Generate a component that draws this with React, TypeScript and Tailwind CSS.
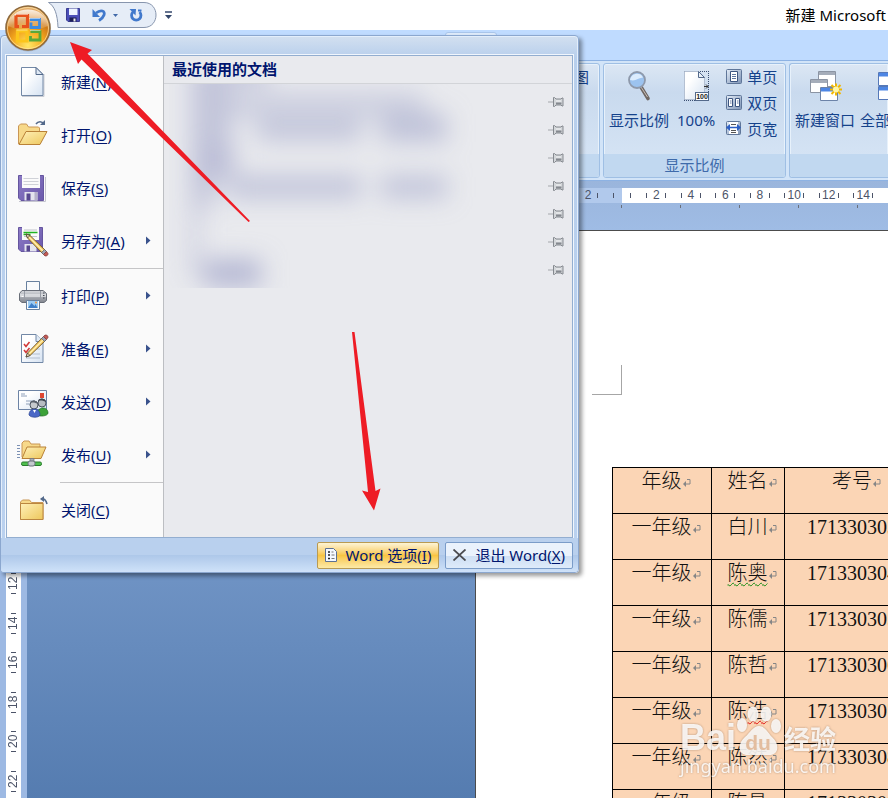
import React from "react";

type IconProps = { className?: string };

const UI_FONT = "font-['Noto_Sans','Noto_Sans_CJK_SC',sans-serif]";

/* ---------- gradients shared by the drawings ---------- */

function SharedDefs() {
  return (
    <svg className="absolute size-0" aria-hidden="true">
      <defs>
        <linearGradient id="paper" x1="0" y1="0" x2="1" y2="1">
          <stop offset="0.3" stopColor="#ffffff" />
          <stop offset="1" stopColor="#d5e2f2" />
        </linearGradient>
        <linearGradient id="folder" x1="0" y1="0" x2="1" y2="1">
          <stop offset="0" stopColor="#fff0b8" />
          <stop offset="1" stopColor="#edc75c" />
        </linearGradient>
        <linearGradient id="disk" x1="0" y1="0" x2="1" y2="1">
          <stop offset="0" stopColor="#8d7cc6" />
          <stop offset="1" stopColor="#6a58ab" />
        </linearGradient>
        <linearGradient id="metal" x1="0" y1="0" x2="0" y2="1">
          <stop offset="0" stopColor="#d6d8dc" />
          <stop offset="1" stopColor="#82868f" />
        </linearGradient>
        <linearGradient id="chip" x1="0" y1="0" x2="1" y2="1">
          <stop offset="0" stopColor="#e4edf8" />
          <stop offset="1" stopColor="#7d93b5" />
        </linearGradient>
        <radialGradient id="orb" cx="0.5" cy="0.9" r="0.9">
          <stop offset="0" stopColor="#ffe766" />
          <stop offset="0.4" stopColor="#f5a81c" />
          <stop offset="0.65" stopColor="#cf7a18" />
          <stop offset="1" stopColor="#e9b87c" />
        </radialGradient>
        <linearGradient id="gloss" x1="0" y1="0" x2="0" y2="1">
          <stop offset="0" stopColor="#fff" stopOpacity="0.8" />
          <stop offset="1" stopColor="#fff" stopOpacity="0.1" />
        </linearGradient>
      </defs>
    </svg>
  );
}

/* ---------- menu icons ---------- */

function NewIcon({ className }: IconProps) {
  return (
    <svg viewBox="0 0 32 32" className={className}>
      <path d="M5 30.500h22V8" fill="none" stroke="#c9ccd3" />
      <path d="M4.500 1.500h14.500l7 7v21H4.500z" fill="url(#paper)" stroke="#7288a6" />
      <path d="M19 1.500v7h7z" fill="#dfe9f5" stroke="#53698a" />
    </svg>
  );
}

function OpenIcon({ className }: IconProps) {
  return (
    <svg viewBox="0 0 32 32" className={className}>
      <path d="M1.500 25V7l2-2h6l2 3h10l1 1v4" fill="#f7d98a" stroke="#c99655" />
      <path d="M2 25.500l7-13h21l-7 13z" fill="url(#folder)" stroke="#b98137" />
      <path d="M19 5c2-3 6-3 8 0" fill="none" stroke="#53698a" strokeWidth="1.500" />
      <path d="M28 1v5h-5z" fill="#53698a" />
    </svg>
  );
}

function SaveIcon({ className }: IconProps) {
  return (
    <svg viewBox="0 0 32 32" className={className}>
      <path d="M2 29.500h26.500V5" fill="none" stroke="#c5c5cf" />
      <path d="M1.500 3.500h25v25H4l-2.500-2.500z" fill="url(#disk)" stroke="#65559f" />
      <path d="M5 3h18v13H5z" fill="#fbfbfb" />
      <path d="M6.500 6.500h15M6.500 9.500h15M6.500 12.500h15" stroke="#d0d2d8" />
      <path d="M7.500 20h13v8.500h-13z" fill="#e4e4ee" />
      <path d="M9.500 21.500h4v7h-4z" fill="#57478f" />
      <path d="M17.500 20h3v8.500h-3z" fill="#b5b1ca" />
    </svg>
  );
}

function Pencil() {
  return (
    <g>
      <path d="M0 0l1.500 4L17 20l3-3L4 1.500z" fill="#f2c75e" stroke="#6e5529" strokeWidth="0.900" />
      <path d="M2.500 2.500l16 16" stroke="#fff0b2" strokeWidth="1.200" />
      <path d="M0 0l1.500 4L4 1.500z" fill="#f1dfbf" stroke="#4a3f32" strokeWidth="0.800" />
      <path d="M15.500 18.500l3-3 2 2-3 3z" fill="#9fa6b3" stroke="#565d6b" strokeWidth="0.700" />
      <path d="M17.500 20.500l3-3 1.500 2c0 2-1 2.500-3 2.500z" fill="#c45b56" stroke="#7d3532" strokeWidth="0.700" />
    </g>
  );
}

function SaveAsIcon({ className }: IconProps) {
  return (
    <svg viewBox="0 0 32 32" className={className}>
      <path d="M1.500 2.500h24v24H4l-2.500-2.500z" fill="url(#disk)" stroke="#65559f" />
      <path d="M5 2h17v13H5z" fill="#fbfbfb" />
      <path d="M7 5h13M7 11.500h13" stroke="#c1c3ca" />
      <path d="M6.500 7.500h14M6.500 9.500h7" stroke="#21b421" strokeWidth="1.300" />
      <path d="M7.500 19h12v7.500h-12z" fill="#e4e4ee" />
      <path d="M9.500 20.500H13v6H9.500z" fill="#57478f" />
      <g transform="translate(9 9)">
        <Pencil />
      </g>
    </svg>
  );
}

function PrintIcon({ className }: IconProps) {
  return (
    <svg viewBox="0 0 32 32" className={className}>
      <path d="M9.500 11V1.500h13V11z" fill="#f8fafc" stroke="#67809f" />
      <path d="M5 10.500h21l3.500 3v7L27 22.500H5l-2.500-2v-7z" fill="url(#metal)" stroke="#696e78" />
      <path d="M3 14h26v3H3z" fill="#e6e7ea" opacity="0.7" />
      <path d="M7.500 11v8h16v-8" fill="none" stroke="#989ca5" />
      <path d="M26 13h1.500M26 15.500h1.500M26 18h1.500" stroke="#454b56" />
      <path d="M4.500 16.500h2" stroke="#fff" />
      <path d="M9.500 20.500h13v9h-13z" fill="#f8fafc" stroke="#67809f" />
      <path d="M11 21h10v7H11z" fill="#9ccbf2" />
      <path d="M11 28l3.500-5 3 3 1-2 2 4z" fill="#3e7fc9" />
      <circle cx="19" cy="22.500" r="1" fill="#f0923c" />
    </svg>
  );
}

function PrepareIcon({ className }: IconProps) {
  return (
    <svg viewBox="0 0 32 32" className={className}>
      <path d="M4.500 1.500h14.500l7 7v21H4.500z" fill="url(#paper)" stroke="#7288a6" />
      <path d="M19 1.500v7h7" fill="#dfe9f5" stroke="#7288a6" />
      <path d="M7 11l2 2.500 3.500-4.500M7 17l2 2.500 3.500-4.500" fill="none" stroke="#d23a3a" strokeWidth="1.600" />
      <path d="M12 21h11M9 25h14M16 16h7" stroke="#b3bfd0" />
      <g transform="translate(9 24) scale(1 -1)">
        <Pencil />
      </g>
    </svg>
  );
}

function SendIcon({ className }: IconProps) {
  return (
    <svg viewBox="0 0 32 32" className={className}>
      <path d="M1.500 4.500h28v19h-28z" fill="url(#paper)" stroke="#6c83a5" />
      <path d="M4 8h4M4 10h6M9 15h9M9 18h6" stroke="#8fa0ba" />
      <path d="M23 7h4v5h-4z" fill="#de4632" />
      <circle cx="25" cy="17" r="4" fill="#b7bcc2" stroke="#4d5560" />
      <path d="M21 15c0-3 7-4 8 1-2-1-5-2-8-1z" fill="#3f4650" />
      <path d="M20 29c0-9 11-9 11-2 0 3-8 4-11 2z" fill="#3ca238" stroke="#206b24" strokeWidth="0.700" />
      <circle cx="17" cy="19" r="4" fill="#c6cace" stroke="#4d5560" />
      <path d="M13 17c0-3 7-4 8 1-2-1-5-2-8-1z" fill="#59616c" />
      <path d="M12 29c0-8 11-8 11 0-1 3-9 3-11 0z" fill="#4a68c6" stroke="#2d4591" strokeWidth="0.700" />
      <path d="M16 24l1.500 3 1.500-3z" fill="#fff" />
    </svg>
  );
}

function PublishIcon({ className }: IconProps) {
  return (
    <svg viewBox="0 0 32 32" className={className}>
      <path d="M0 6.500h3M0 9.500h3M0 12.500h3M0 15.500h3M0 18.500h3" stroke="#7b90b4" strokeWidth="1.200" />
      <path d="M5 18V4l2-2h5l2 3h9v4" fill="#f7d98a" stroke="#c99655" />
      <path d="M5 19.500L10 8h19l-5 11.500z" fill="url(#folder)" stroke="#b98137" />
      <path d="M13 19.500h4V24h-4z" fill="#a7acb5" stroke="#6d737e" strokeWidth="0.700" />
      <rect x="4.500" y="23" width="20" height="3.500" rx="1.500" fill="#4fc04d" stroke="#2c7d2f" />
      <rect x="11" y="22" width="7" height="5" rx="2" fill="#c5c9cf" stroke="#6d737e" />
    </svg>
  );
}

function CloseDocIcon({ className }: IconProps) {
  return (
    <svg viewBox="0 0 32 32" className={className}>
      <path d="M3.500 25.500V8l2-2h7l2 2.500H26v17z" fill="#f7d98a" stroke="#c99655" />
      <path d="M3.500 9.500H26v16H3.500z" fill="url(#folder)" stroke="#bb8640" />
      <path d="M24 5c3-1 5 1 6 5" fill="none" stroke="#53698a" strokeWidth="1.600" />
      <path d="M23 5l4-3v6z" fill="#53698a" />
    </svg>
  );
}

function SubmenuArrow() {
  return (
    <svg viewBox="0 0 5 9" className="h-[9px] w-[5px]">
      <path d="M0 0.500v8L4.500 4.500z" fill="#39528c" />
    </svg>
  );
}

function PinIcon() {
  return (
    <svg viewBox="0 0 16 10" className="h-2.5 w-4">
      <path d="M0 5h6" stroke="#a5a8ac" />
      <path d="M5.500 0.500v9h1l1.500-1.500h5l1 1h1v-8h-1l-1 1H8L6.500 0.500z" fill="#d3d6d9" stroke="#85898f" />
      <path d="M8 6.500h5.500" stroke="#85898f" strokeWidth="2" />
      <path d="M8 4h5" stroke="#f3f4f5" />
    </svg>
  );
}

/* ---------- ribbon icons ---------- */

function ZoomIcon({ className }: IconProps) {
  return (
    <svg viewBox="0 0 32 32" className={className}>
      <path d="M18 17l7 11.500" stroke="#6f6763" strokeWidth="3.600" strokeLinecap="round" />
      <path d="M18 17l6.500 10" stroke="#c9bfb8" strokeWidth="1" />
      <circle cx="14" cy="10" r="8" fill="#9cc3ef" stroke="#8e99ab" strokeWidth="1.800" />
      <path d="M7 10c1-8 12-8 13-2-4-1-7 4-13 2z" fill="#dcecfd" />
    </svg>
  );
}

function HundredIcon({ className }: IconProps) {
  return (
    <svg viewBox="0 0 32 32" className={className}>
      <path d="M4 1.500h25M4 30.500h25M28.500 1v30M4.500 1v30" fill="none" stroke="#3b4f72" strokeDasharray="1 1" />
      <path d="M4.500 1.500h14l6 6v22h-20z" fill="url(#paper)" stroke="#b4c0d2" />
      <path d="M18.500 1.500v6h6z" fill="#eaf1f9" stroke="#53698a" />
      <path d="M24 16.500h4M26 14.500l2 2-2 2" fill="none" stroke="#333" />
      <rect x="15.500" y="22.500" width="13" height="8" fill="#fff" stroke="#53698a" />
      <text x="22" y="29" textAnchor="middle" fontSize="7" fontWeight="700" fontFamily="Liberation Sans, sans-serif" fill="#222">
        100
      </text>
    </svg>
  );
}

function OnePageIcon() {
  return (
    <svg viewBox="0 0 16 16" className="size-4">
      <rect x="0.500" y="0.500" width="15" height="14" rx="1" fill="url(#chip)" stroke="#5f7699" />
      <path d="M4.500 2.500h7v10h-7z" fill="#fff" stroke="#3c5580" />
      <path d="M6 5.500h4M6 7.500h4M6 9.500h4" stroke="#5e76a0" />
    </svg>
  );
}

function TwoPageIcon() {
  return (
    <svg viewBox="0 0 16 16" className="size-4">
      <rect x="0.500" y="0.500" width="15" height="14" rx="1" fill="url(#chip)" stroke="#5f7699" />
      <path d="M2.500 3.500h4v8h-4zM9.500 3.500h4v8h-4z" fill="#fff" stroke="#3c5580" />
      <path d="M4 6h1.500M4 8h1.500M11 6h1.500M11 8h1.500" stroke="#5e76a0" />
    </svg>
  );
}

function PageWidthIcon() {
  return (
    <svg viewBox="0 0 16 16" className="size-4">
      <rect x="0.500" y="0.500" width="14" height="13" rx="1" fill="url(#chip)" stroke="#5f7699" />
      <path d="M3 1h9v12H3z" fill="#fff" />
      <path d="M5 3.500h5M5 9.500h5M5 11.500h5" stroke="#555" />
      <path d="M0 6.500L4 3v7zM15 6.500L11 3v7z" fill="#2c5fc4" />
      <path d="M3 6.500h9" stroke="#2c5fc4" strokeWidth="1.600" />
    </svg>
  );
}

function NewWindowIcon({ className }: IconProps) {
  return (
    <svg viewBox="0 0 32 32" className={className}>
      <path d="M9.500 1.500h17v15h-17z" fill="#fff" stroke="#8b94a3" />
      <path d="M10 2h16v3H10z" fill="#a5adba" />
      <path d="M1.500 9.500h17v13h-17z" fill="#fff" stroke="#8b94a3" />
      <path d="M2 10h16v3H2z" fill="#a5adba" />
      <path d="M11.500 17.500h17v13h-17z" fill="#fff" stroke="#6c83a8" />
      <path d="M12 18h16v3.500H12z" fill="#4d86e4" />
      <path d="M27 13.500v12M21 19.500h12M22.500 15l9 9M31.500 15l-9 9" stroke="#f2b800" strokeWidth="2" />
      <circle cx="27" cy="19.500" r="3" fill="#fff7a8" />
    </svg>
  );
}

function ArrangeIcon({ className }: IconProps) {
  return (
    <svg viewBox="0 0 32 32" className={className}>
      <path d="M4.500 2.500h24v13h-24zM4.500 16.500h24v13h-24z" fill="#fff" stroke="#5578b8" />
      <path d="M5 3h23v3.500H5zM5 17h23v3.500H5z" fill="#4d86e4" />
    </svg>
  );
}

/* ---------- title bar ---------- */

function OfficeButton() {
  return (
    <button type="button" aria-label="Office" className="absolute top-1 left-1 z-30 size-12">
      <svg viewBox="0 0 48 48" className="size-12">
        <circle cx="24" cy="24.500" r="23" fill="#5f718c" opacity="0.3" />
        <circle cx="24" cy="24" r="22" fill="url(#orb)" stroke="#8f6a3c" strokeWidth="1.500" />
        <circle cx="24" cy="24" r="20.500" fill="none" stroke="#ffe6a8" strokeOpacity="0.7" />
        <path d="M4 22C5 0 43 0 44 22c-12 5-28 5-40 0z" fill="url(#gloss)" />
        <g fill="none">
          <path d="M12 11.500h11.500v11H18M12 11.500v11h3" stroke="#e8521c" strokeWidth="3.200" />
          <path d="M26 15.500h9.500v8H27v-5" stroke="#3c8be0" strokeWidth="2.800" />
          <path d="M13.500 27H23v10h-9.500z" stroke="#fbc51c" strokeWidth="3.200" />
          <path d="M26.500 27.500H36V36h-9.500v-4" stroke="#58a83a" strokeWidth="2.800" />
          <path d="M11 10.500h13M25 14.500h11M12.500 26h11M26 26.500h10.500" stroke="#fff" strokeOpacity="0.5" />
        </g>
      </svg>
    </button>
  );
}

function QuickAccess() {
  return (
    <div className="relative ml-12 flex h-full items-center">
      <svg viewBox="0 0 110 28" className="absolute top-0 left-0 h-7 w-[110px]" aria-hidden="true">
        <path d="M0.500 2.500H96c16 0 16 25 0 25H10C9.500 14 6.500 6 0.500 2.500z" fill="#e6edf7" stroke="#8795ad" />
      </svg>
      <div className="relative flex items-center pl-[18px]">
        <button type="button" aria-label="保存">
          <svg viewBox="0 0 15 15" className="size-[15px]">
            <path d="M0.500 0.500h13v13H2l-1.500-1.500z" fill="#4b4fb8" stroke="#3a3d92" />
            <path d="M3 0.500h8.500V7H3z" fill="#eef5ff" />
            <path d="M3.500 9.500h7v4h-7z" fill="#1c1f55" />
            <path d="M7.500 10.500h2v3h-2z" fill="#eee" />
          </svg>
        </button>
        <button type="button" aria-label="撤消" className="ml-[11px]">
          <svg viewBox="0 0 15 15" className="size-[15px]">
            <path d="M4 5c5-4 9.500-2 8 2-1 3-2.500 4-5 5.500" fill="none" stroke="#4179cc" strokeWidth="2.800" />
            <path d="M0.500 1v8H8z" fill="#4179cc" />
          </svg>
        </button>
        <button type="button" aria-label="撤消选项" className="ml-1.5">
          <svg viewBox="0 0 5 3" className="h-[3px] w-[5px]">
            <path d="M0 0h5L2.500 3z" fill="#4169a8" />
          </svg>
        </button>
        <button type="button" aria-label="恢复" className="ml-[11px]">
          <svg viewBox="0 0 15 15" className="size-[15px]">
            <path d="M4 4A4.700 4.700 0 1 0 10.500 4" fill="none" stroke="#4179cc" strokeWidth="2.800" />
            <path d="M7 1H0.500l6 6.500z" fill="#4179cc" />
            <path d="M9 2.500h3.500" stroke="#4179cc" strokeWidth="2" />
          </svg>
        </button>
        <button type="button" aria-label="自定义快速访问工具栏" className="ml-[21px]">
          <svg viewBox="0 0 7 8" className="h-2 w-[7px]">
            <path d="M0 1h7" stroke="#33466b" strokeWidth="1.500" />
            <path d="M0 4h7L3.500 8z" fill="#33466b" />
          </svg>
        </button>
      </div>
    </div>
  );
}

function TitleBar() {
  return (
    <header className="flex h-[30px] shrink-0 items-center justify-between bg-white">
      <QuickAccess />
      <h1 className="pr-0.5 text-[15px] leading-5 text-black">新建 Microsoft</h1>
    </header>
  );
}

/* ---------- ribbon ---------- */

function Group({ label, className, children }: { label?: string; className: string; children?: React.ReactNode }) {
  return (
    <section className={`flex flex-col overflow-hidden rounded-[3px] border border-[#9fbfe4] bg-linear-to-b from-[#dce7f4] from-0% via-[#c9daee] via-25% to-[#d8e6f6] shadow-[inset_0_0_0_1px_#e7f1fb] ${className}`}>
      <div className="flex flex-1 overflow-hidden">{children}</div>
      <p className="h-[23px] shrink-0 bg-[#c1d8f0] text-center text-[15px] leading-[23px] text-[#3e6aaa]">{label}</p>
    </section>
  );
}

function BigButton({ label, className, children }: { label: string; className: string; children: React.ReactNode }) {
  return (
    <button type="button" className={`flex shrink-0 flex-col items-center gap-2 self-start pt-1.5 text-[15px] leading-5 whitespace-nowrap text-[#15428b] ${className}`}>
      {children}
      {label}
    </button>
  );
}

function SmallButton({ label, children }: { label: string; children: React.ReactNode }) {
  return (
    <button type="button" className="flex h-[26px] items-center gap-[5px] text-[15px] leading-5 text-[#15428b]">
      {children}
      {label}
    </button>
  );
}

function Ribbon() {
  return (
    <div className="flex h-[121px] shrink-0 gap-[3px] border-y border-[#8db2e3] bg-[#d2e4f8] py-0.5">
      <Group className="w-[600px] shrink-0">
        <span className="ml-auto pt-[3px] pr-2.5 text-[15px] leading-5 text-[#15428b]">图</span>
      </Group>
      <Group label="显示比例" className="w-[183px] shrink-0">
        <BigButton label="显示比例" className="ml-[5px]">
          <ZoomIcon className="size-8" />
        </BigButton>
        <BigButton label="100%" className="ml-2">
          <HundredIcon className="size-8" />
        </BigButton>
        <div className="ml-[11px]">
          <SmallButton label="单页">
            <OnePageIcon />
          </SmallButton>
          <SmallButton label="双页">
            <TwoPageIcon />
          </SmallButton>
          <SmallButton label="页宽">
            <PageWidthIcon />
          </SmallButton>
        </div>
      </Group>
      <Group className="min-w-0 flex-1 rounded-r-none border-r-0">
        <BigButton label="新建窗口" className="ml-[5px]">
          <NewWindowIcon className="size-8 overflow-visible" />
        </BigButton>
        <BigButton label="全部重排" className="ml-[5px]">
          <ArrangeIcon className="size-8" />
        </BigButton>
      </Group>
    </div>
  );
}

/* ---------- rulers ---------- */

function HorizontalCell({ value }: { value: number }) {
  return (
    <div className="flex flex-1 items-center justify-center gap-1">
      <i className="h-[5px] w-px bg-[#4c5468]" />
      <span className="flex w-2.5 justify-center text-[12px] leading-[15px]">{value}</span>
      <i className="h-[5px] w-px bg-[#4c5468]" />
    </div>
  );
}

function HorizontalRuler() {
  return (
    <div className="h-[49px] shrink-0 bg-linear-to-b from-[#9ab5dc] to-[#9fbce5] pt-[7px] font-['Liberation_Sans',sans-serif] text-[#4c5468]">
      <div className="flex h-[15px] overflow-hidden bg-[#b1c9ec]">
        <div className="flex w-[622px] shrink-0 items-center justify-end">
          <div className="flex w-[34px]">
            <HorizontalCell value={2} />
          </div>
          <div className="flex w-[17px] justify-center">
            <i className="h-[5px] w-px bg-[#4c5468]" />
          </div>
        </div>
        <div className="flex flex-1 items-center bg-white">
          <div className="flex w-[17px] shrink-0 justify-center">
            <i className="h-[5px] w-px bg-[#4c5468]" />
          </div>
          <div className="flex w-[276px] shrink-0">
            {[2, 4, 6, 8, 10, 12, 14, 16].map((n) => (
              <HorizontalCell key={n} value={n} />
            ))}
          </div>
        </div>
      </div>
      <div className="mt-0.5 flex overflow-hidden pl-[621px]">
        {[0, 1, 2, 3, 4].map((n) => (
          <i key={n} className="h-[3px] w-[59px] shrink-0 border-l border-[#6a6f7a]" />
        ))}
      </div>
    </div>
  );
}

function VerticalRuler() {
  return (
    <div className="flex w-[27px] shrink-0 justify-start bg-[#9db9e3] pl-1.5 font-['Liberation_Sans',sans-serif] text-[#4c5468]">
      <div className="h-full w-[15px] overflow-hidden bg-white pt-[334px]">
        <div className="flex h-[237px] flex-col">
          {[12, 14, 16, 18, 20, 22].map((n) => (
            <div key={n} className="flex flex-1 flex-col items-center justify-center gap-[3px]">
              <i className="h-px w-[5px] bg-[#4c5468]" />
              <span className="h-[13px] rotate-180 text-[12px] leading-[15px] [writing-mode:vertical-rl]">{n}</span>
              <i className="h-px w-[5px] bg-[#4c5468]" />
            </div>
          ))}
        </div>
      </div>
    </div>
  );
}

/* ---------- document ---------- */

type Row = { grade: string; name: string; id: string; wavy?: "green" | "red" };

const rows: Row[] = [
  { grade: "一年级", name: "白川", id: "171330303" },
  { grade: "一年级", name: "陈奥", id: "171330304", wavy: "green" },
  { grade: "一年级", name: "陈儒", id: "171330305" },
  { grade: "一年级", name: "陈哲", id: "171330306" },
  { grade: "一年级", name: "陈浩", id: "171330307", wavy: "red" },
  { grade: "一年级", name: "陈然", id: "171330308" },
  { grade: "一年级", name: "陈昌", id: "171330309" },
];

function Mark() {
  return (
    <svg viewBox="0 0 8 8" className="ml-px inline-block size-2" aria-hidden="true">
      <path d="M4 0.500h3v4.500H2" fill="none" stroke="#868686" />
      <path d="M0 5l3-3v6z" fill="#868686" />
    </svg>
  );
}

function NameText({ row }: { row: Row }) {
  if (row.wavy === "green") {
    return <span className="underline decoration-[#118a11] decoration-wavy decoration-1 underline-offset-2">{row.name}</span>;
  }
  if (row.wavy === "red") {
    return (
      <>
        {row.name.slice(0, 1)}
        <span className="underline decoration-[#e01010] decoration-wavy decoration-1 underline-offset-2">{row.name.slice(1)}</span>
      </>
    );
  }
  return <>{row.name}</>;
}

function Page() {
  return (
    <main className="min-w-0 flex-1 overflow-hidden border-t border-l border-[#4c4c4c] bg-white">
      <div className="mt-[134px] ml-[116px] h-[30px] w-[30px] border-r border-b border-[#a6a6a6]" />
      <table className="mt-[72px] ml-[136px] w-[317px] table-fixed border-collapse bg-[#fbd5b5] font-['Liberation_Serif','Noto_Sans_CJK_SC',serif] text-[20px] leading-[26px] font-light text-[#111]">
        <colgroup>
          <col className="w-[99px]" />
          <col className="w-[73px]" />
          <col className="w-[144px]" />
        </colgroup>
        <thead>
          <tr className="h-[46px]">
            <th className="border border-black p-0 pl-2 align-top font-light whitespace-nowrap">
              年级
              <Mark />
            </th>
            <th className="border border-black p-0 pl-2 align-top font-light whitespace-nowrap">
              姓名
              <Mark />
            </th>
            <th className="border border-black p-0 align-top font-light whitespace-nowrap">
              考号
              <Mark />
            </th>
          </tr>
        </thead>
        <tbody>
          {rows.map((row) => (
            <tr key={row.id} className="h-[46px] text-center">
              <td className="border border-black p-0 pl-2 align-top whitespace-nowrap">
                {row.grade}
                <Mark />
              </td>
              <td className="border border-black p-0 pl-2 align-top whitespace-nowrap">
                <NameText row={row} />
                <Mark />
              </td>
              <td className="border border-black p-0 align-top whitespace-nowrap">
                {row.id}
                <Mark />
              </td>
            </tr>
          ))}
        </tbody>
      </table>
    </main>
  );
}

/* ---------- office menu ---------- */

type MenuEntry = { label: string; hot: string; icon: (p: IconProps) => React.ReactElement; sub?: boolean };

const sections: MenuEntry[][] = [
  [
    { label: "新建", hot: "N", icon: NewIcon },
    { label: "打开", hot: "O", icon: OpenIcon },
    { label: "保存", hot: "S", icon: SaveIcon },
    { label: "另存为", hot: "A", icon: SaveAsIcon, sub: true },
  ],
  [
    { label: "打印", hot: "P", icon: PrintIcon, sub: true },
    { label: "准备", hot: "E", icon: PrepareIcon, sub: true },
    { label: "发送", hot: "D", icon: SendIcon, sub: true },
    { label: "发布", hot: "U", icon: PublishIcon, sub: true },
  ],
  [{ label: "关闭", hot: "C", icon: CloseDocIcon }],
];

function MenuItem({ entry }: { entry: MenuEntry }) {
  const Icon = entry.icon;
  return (
    <button type="button" className="flex h-[53px] w-full items-center pr-3 pb-0.5 pl-2.5 text-left text-[15px] leading-5 text-[#00156e]">
      <Icon className="size-8" />
      <span className="ml-3 flex-1">
        {entry.label}(<u className="underline-offset-2">{entry.hot}</u>)
      </span>
      {entry.sub && <SubmenuArrow />}
    </button>
  );
}

function BlurredNames() {
  return (
    <svg viewBox="0 0 320 204" className="absolute top-0 left-[5px] h-[204px] w-80 overflow-hidden" aria-hidden="true">
      <defs>
        <filter id="soft" x="-20%" y="-20%" width="140%" height="140%">
          <feGaussianBlur stdDeviation="12" />
        </filter>
      </defs>
      <g filter="url(#soft)" fill="#b2b5d2">
        <path d="M22 -20h78v20H62v95H45v28H30v70h-8z" opacity="0.7" />
        <path d="M60 8h190l12 26H60z" opacity="0.5" />
        <path d="M88 36h104v20H88zM212 30h66v28h-66z" opacity="0.75" />
        <path d="M60 92h132v22H60zM212 92h66v22h-66z" opacity="0.75" />
        <path d="M35 176h57v26H35z" opacity="1" />
        <path d="M30 60h38v36H30z" opacity="0.4" />
      </g>
    </svg>
  );
}

function OfficeMenu() {
  return (
    <div className="absolute top-[35px] left-0 z-20 flex w-[579px] flex-col rounded-[4px] border border-[#8ba7cf] bg-linear-to-b from-[#d3e0f0] from-0% via-[#b8cfec] via-4% to-[#bad1ef] shadow-[inset_0_0_0_1px_#e3eefb,3px_3px_4px_rgba(0,0,0,0.4)]">
      <div className="mx-[5px] mt-[19px] flex border border-[#93aed0] shadow-[0_0_0_1px_#f0f6fd]">
        <nav aria-label="文件" className="w-[157px] shrink-0 border-r border-[#bcbec2] bg-[#fafafa]">
          {sections.map((entries, i) => (
            <div key={i} className={i > 0 ? "relative pt-0.5" : ""}>
              {i > 0 && <hr className="absolute top-0 right-0 left-[53px] border-[#c5c5c7]" />}
              {entries.map((e) => (
                <MenuItem key={e.hot} entry={e} />
              ))}
            </div>
          ))}
        </nav>
        <section className="flex min-w-0 flex-1 flex-col bg-[#e9eaee]">
          <h2 className="h-7 border-b border-[#d2d4d8] pl-2 text-[15px] leading-[27px] font-bold text-[#00156e]">最近使用的文档</h2>
          <div className="relative pt-1">
            <BlurredNames />
            <ul>
              {[1, 2, 3, 4, 5, 6, 7].map((n) => (
                <li key={n} className="flex h-7 items-center justify-end pr-2">
                  <button type="button" aria-label={`固定文档 ${n}`}>
                    <PinIcon />
                  </button>
                </li>
              ))}
            </ul>
          </div>
        </section>
      </div>
      <footer className="flex h-[34px] items-center justify-end gap-1.5 rounded-b-[3px] bg-linear-to-b from-[#b9d0ee] from-50% via-[#adc7e9] via-50% to-[#cfe2f9] pr-[5px] text-[15px] leading-5 text-[#00156e]">
        <button type="button" className="flex h-[27px] items-center rounded-[2px] border border-[#b99a52] bg-linear-to-b from-[#fdf4d4] via-[#f8c542] via-50% to-[#fdeaa6] px-[7px] whitespace-nowrap">
          <svg viewBox="0 0 12 14" className="mr-[9px] h-3.5 w-3">
            <path d="M0.500 0.500h8l3 3v10h-11z" fill="#f5f9ff" stroke="#5c7092" />
            <path d="M3 4h2M3 7h2M3 10.500h2" stroke="#222" strokeWidth="1.600" />
            <path d="M6.500 4h2M6.500 7h3M6.500 10.500h3" stroke="#777" />
          </svg>
          <span>
            Word 选项(<u className="underline-offset-2">I</u>)
          </span>
        </button>
        <button type="button" className="flex h-[27px] items-center rounded-[2px] border border-[#7a9cc9] bg-linear-to-b from-[#eaf2fc] from-50% via-[#cddef3] via-50% to-[#deebfa] px-[7px] whitespace-nowrap">
          <svg viewBox="0 0 13 12" className="mr-[9px] h-3 w-[13px]">
            <path d="M0.500 0.500l12 11M12.500 0.500l-12 11" stroke="#4b4b4f" strokeWidth="1.800" />
          </svg>
          <span>
            退出 Word(<u className="underline-offset-2">X</u>)
          </span>
        </button>
      </footer>
    </div>
  );
}

/* ---------- overlays ---------- */

function Arrows() {
  return (
    <svg viewBox="0 0 400 520" className="pointer-events-none absolute top-0 left-0 z-40 h-[520px] w-[400px]" aria-hidden="true">
      <path d="M70 42l22 8-4.500 3.500L250 221l-1.500 1L81.500 59.500 78 64z" fill="#ee1c25" />
      <path d="M352 332h2.500L375.500 491l5-2.500L374 510.500 362 490.500l6 1.500z" fill="#ee1c25" />
    </svg>
  );
}

function Watermark() {
  return (
    <div className="pointer-events-none absolute top-[704px] left-[680px] z-10 w-40 text-white/85 drop-shadow-[0_0_1px_rgba(120,90,70,0.6)]">
      <div className="flex h-[52px] items-end">
        <span className="font-['Liberation_Sans',sans-serif] text-[36px] leading-9 font-bold">Bai</span>
        <svg viewBox="0 0 46 50" className="h-[50px] w-[46px]">
          <g fill="#fff" fillOpacity="0.85">
            <ellipse cx="6" cy="19" rx="5" ry="7" />
            <ellipse cx="17" cy="8" rx="5.500" ry="7.500" />
            <ellipse cx="30" cy="8" rx="5.500" ry="7.500" />
            <ellipse cx="40" cy="20" rx="5" ry="7" />
            <path d="M23 20c6 0 9 7 13 11 8 7 7 18-3 18H12C2 49 1 38 9 31c5-4 8-11 14-11z" />
          </g>
          <text x="22" y="44" textAnchor="middle" fontSize="21" fontWeight="700" fontFamily="Liberation Sans, sans-serif" fill="#e3bd9f">
            du
          </text>
        </svg>
        <span className="ml-0.5 font-['Noto_Sans_CJK_SC',sans-serif] text-[26px] leading-9 font-bold">经验</span>
      </div>
      <p className="-mt-0.5 text-[18px] leading-6">jingyan.baidu.com</p>
    </div>
  );
}

export default function App() {
  return (
    <div className={`relative flex h-screen flex-col overflow-hidden ${UI_FONT}`}>
      <SharedDefs />
      <TitleBar />
      <div className="flex h-[30px] shrink-0 items-start bg-[#bfdbff] pt-0.5">
        <i className="ml-[445px] h-7 w-[52px] rounded-t-[3px] border border-[#a9c5ea] bg-[#deebfb]" />
      </div>
      <Ribbon />
      <HorizontalRuler />
      <div className="flex min-h-0 flex-1">
        <VerticalRuler />
        <div className="w-[448px] shrink-0 bg-linear-to-b from-[#86a7d6] via-[#6f93c4] via-60% to-[#557cb0]" />
        <Page />
      </div>
      <OfficeButton />
      <OfficeMenu />
      <Arrows />
      <Watermark />
    </div>
  );
}
